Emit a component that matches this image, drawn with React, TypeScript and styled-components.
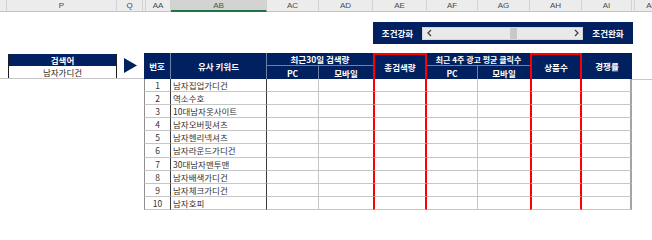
import React from "react";
import styled, { createGlobalStyle, css } from "styled-components";

const NAVY = "#002060";
const GRID = "#c6c6c6";
const INK = "#333333";
const RED = "#ff0000";
const HEAD_LINE = "#6f80a6";

const GlobalStyle = createGlobalStyle`
  html, body {
    margin: 0;
    padding: 0;
    background: #ffffff;
    overflow: hidden;
  }
  body {
    font-family: "Noto Sans CJK KR", "Noto Sans", sans-serif;
    color: ${INK};
  }
`;

type SheetCol = { name: string; width: number; selected?: boolean; hidden?: boolean };

// excel column letters along the top
const SHEET_COLS: SheetCol[] = [
  { name: "", width: 7 },
  { name: "P", width: 110 },
  { name: "Q", width: 26 },
  { name: "", width: 3, hidden: true },
  { name: "AA", width: 25 },
  { name: "AB", width: 96, selected: true },
  { name: "AC", width: 52 },
  { name: "AD", width: 54 },
  { name: "AE", width: 54 },
  { name: "AF", width: 51 },
  { name: "AG", width: 52 },
  { name: "AH", width: 52 },
  { name: "AI", width: 50 },
  { name: "", width: 3, hidden: true },
  { name: "AK", width: 34 },
];

type BodyCol = { align?: "left" | "center"; left?: string; right?: string };

const BODY_COLS: BodyCol[] = [
  { align: "center", left: "1px solid #8f8f8f", right: "1px solid #3a3a3a" },
  { align: "left", right: "1px solid #3a3a3a" },
  { right: `1px solid ${GRID}` },
  {},
  { left: `2px solid ${RED}`, right: `2px solid ${RED}` },
  { right: `1px solid ${GRID}` },
  {},
  { left: `2px solid ${RED}`, right: `2px solid ${RED}` },
  { right: "2px solid #a3a3a3" },
];

const KEYWORDS = [
  "남자집업가디건",
  "역소수호",
  "10대남자옷사이트",
  "남자오버핏셔츠",
  "남자헨리넥셔츠",
  "남자라운드가디건",
  "30대남자맨투맨",
  "남자배색가디건",
  "남자체크가디건",
  "남자호피",
];

const Sheet = styled.div`
  width: 652px;
  height: 240px;
  overflow: hidden;
`;

const ColumnBar = styled.div`
  display: flex;
  height: 12px;
  background: #ececec;
  overflow: hidden;
`;

const ColumnHead = styled.div<{ $w: number; $selected?: boolean }>`
  flex: 0 0 ${(p) => p.$w}px;
  box-sizing: border-box;
  height: 12px;
  border-right: 1px solid #d2d2d2;
  border-bottom: 1px solid #c4c4c4;
  font: 8px/11px "Liberation Sans", Arial, sans-serif;
  color: #4a4a4a;
  text-align: center;
  white-space: nowrap;
  ${(p) =>
    p.$selected &&
    css`
      background: #d3d3d3;
      color: #1f6b40;
      border-bottom: 2px solid #217346;
    `}
`;

const SliderRow = styled.div`
  padding: 10px 0 0 373px;
`;

const Slider = styled.div`
  width: 260px;
  height: 22px;
  background: ${NAVY};
  display: grid;
  grid-template-columns: 49px 161px 50px;
  align-items: center;
`;

const SliderLabel = styled.span`
  font-size: 8.5px;
  font-weight: 700;
  color: #ffffff;
  text-align: center;
  white-space: nowrap;
`;

const Track = styled.div`
  display: flex;
  height: 13px;
  box-sizing: border-box;
  background: #e9e9e9;
  border: 1px solid #d6d6d6;
`;

const TrackArrow = styled.span`
  flex: 0 0 12px;
  display: flex;
  align-items: center;
  justify-content: center;
`;

const Lane = styled.div`
  flex: 1;
  position: relative;
`;

const Thumb = styled.div`
  position: absolute;
  top: 0;
  bottom: 0;
  width: 7px;
  background: #c8c8c8;
`;

const Main = styled.div`
  display: flex;
  align-items: flex-start;
  margin-top: 9px;
`;

const LeftBand = styled.div`
  flex: 0 0 144px;
  height: 26px;
  box-sizing: border-box;
  padding: 1px 0 0 8px;
  border-bottom: 1px solid #c6c6c6;
  display: flex;
  align-items: flex-start;
`;

const RightBand = styled.div`
  flex: 1;
  height: 27px;
  box-sizing: border-box;
  border-bottom: 1px solid #c6c6c6;
`;

const SearchBox = styled.div`
  width: 109px;
  box-sizing: border-box;
  border-left: 1px solid #1e1e1e;
  border-right: 1px solid #1e1e1e;
`;

const SearchHead = styled.div`
  height: 12px;
  background: ${NAVY};
  color: #ffffff;
  font-size: 8.5px;
  font-weight: 700;
  line-height: 12px;
  text-align: center;
`;

const SearchValue = styled.div`
  height: 12px;
  font-size: 8.5px;
  line-height: 12px;
  text-align: center;
  color: #262626;
`;

const Pointer = styled.svg`
  margin: 4px 0 0 7px;
`;

const Grid = styled.div`
  flex: 0 0 488px;
  display: grid;
  grid-template-columns: 27px 96px 52px 54px 54px 51px 52px 52px 50px;
  grid-template-rows: 13px 13px repeat(10, 13.1px);
`;

const Head = styled.div<{
  $col: string;
  $row: string;
  $red?: boolean;
  $noRight?: boolean;
  $noBottom?: boolean;
  $size?: number;
}>`
  grid-column: ${(p) => p.$col};
  grid-row: ${(p) => p.$row};
  box-sizing: border-box;
  background: ${NAVY};
  color: #ffffff;
  font-size: ${(p) => p.$size ?? 8.5}px;
  font-weight: 700;
  white-space: nowrap;
  display: flex;
  align-items: center;
  justify-content: center;
  border-right: ${(p) => (p.$noRight ? "none" : `1px solid ${HEAD_LINE}`)};
  border-bottom: ${(p) => (p.$noBottom ? "none" : `1px solid ${HEAD_LINE}`)};
  ${(p) =>
    p.$red &&
    css`
      border-top: 2px solid ${RED};
      border-left: 2px solid ${RED};
      border-right: 2px solid ${RED};
      border-bottom: none;
    `}
`;

const Cell = styled.div<{ $align?: string; $left?: string; $right?: string }>`
  box-sizing: border-box;
  border-bottom: 1px solid ${GRID};
  border-left: ${(p) => p.$left ?? "none"};
  border-right: ${(p) => p.$right ?? "none"};
  padding: 0 2px;
  font-size: 8.5px;
  line-height: 12px;
  color: ${INK};
  text-align: ${(p) => p.$align ?? "left"};
  white-space: nowrap;
  overflow: hidden;
`;

function Chevron({ dir }: { dir: "left" | "right" }) {
  const pts = dir === "left" ? "4,1 1,4 4,7" : "1,1 4,4 1,7";
  return (
    <svg width="5" height="8" viewBox="0 0 5 8">
      <polyline points={pts} fill="none" stroke="#3c3c3c" strokeWidth="1.2" />
    </svg>
  );
}

function CriteriaSlider({ value }: { value: number }) {
  return (
    <Slider>
      <SliderLabel>조건강화</SliderLabel>
      <Track>
        <TrackArrow>
          <Chevron dir="left" />
        </TrackArrow>
        <Lane>
          <Thumb style={{ left: `calc((100% - 7px) * ${value})` }} />
        </Lane>
        <TrackArrow>
          <Chevron dir="right" />
        </TrackArrow>
      </Track>
      <SliderLabel>조건완화</SliderLabel>
    </Slider>
  );
}

export default function App() {
  return (
    <>
      <GlobalStyle />
      <Sheet>
        <ColumnBar>
          {SHEET_COLS.map((c, i) => (
            <ColumnHead key={i} $w={c.width} $selected={c.selected}>
              {c.name}
            </ColumnHead>
          ))}
        </ColumnBar>

        <SliderRow>
          <CriteriaSlider value={0.585} />
        </SliderRow>

        <Main>
          <LeftBand>
            <SearchBox>
              <SearchHead>검색어</SearchHead>
              <SearchValue>남자가디건</SearchValue>
            </SearchBox>
            <Pointer width="13" height="15" viewBox="0 0 13 15">
              <polygon points="0,0 13,7.5 0,15" fill={NAVY} />
            </Pointer>
          </LeftBand>

          <Grid>
            <Head $col="1" $row="1 / 3" $noBottom>번호</Head>
            <Head $col="2" $row="1 / 3" $noBottom>유사 키워드</Head>
            <Head $col="3 / 5" $row="1" $noRight>최근30일 검색량</Head>
            <Head $col="5" $row="1 / 3" $red>총검색량</Head>
            <Head $col="6 / 8" $row="1" $noRight $size={8}>
              최근 4주 광고 평균 클릭수
            </Head>
            <Head $col="8" $row="1 / 3" $red>상품수</Head>
            <Head $col="9" $row="1 / 3" $noRight $noBottom>경쟁률</Head>
            <Head $col="3" $row="2" $noBottom>PC</Head>
            <Head $col="4" $row="2" $noBottom $noRight>모바일</Head>
            <Head $col="6" $row="2" $noBottom>PC</Head>
            <Head $col="7" $row="2" $noBottom $noRight>모바일</Head>

            {KEYWORDS.map((kw, r) =>
              BODY_COLS.map((col, c) => (
                <Cell
                  key={`${r}-${c}`}
                  $align={col.align}
                  $left={col.left}
                  $right={col.right}
                >
                  {c === 0 ? r + 1 : c === 1 ? kw : null}
                </Cell>
              ))
            )}
          </Grid>

          <RightBand />
        </Main>
      </Sheet>
    </>
  );
}
